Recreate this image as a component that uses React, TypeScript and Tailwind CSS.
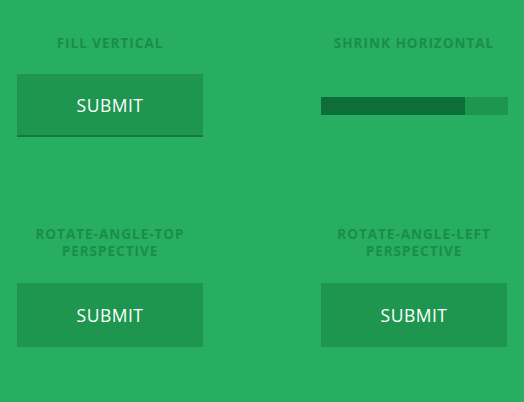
import React from 'react';

const Title: React.FC<{ lines: string[] }> = ({ lines }) => (
  <h2 className="text-center text-[13.5px] font-bold leading-[17px] tracking-[1px] text-[#1a8d4b]">
    {lines.map(l => (
      <div key={l}>{l}</div>
    ))}
  </h2>
);

const SubmitButton: React.FC<{ underline?: boolean }> = ({ underline }) => (
  <button
    className={
      'mx-[17px] flex w-[186px] items-center justify-center bg-[#1e9650] text-[17.5px] tracking-[0.5px] text-white ' +
      (underline ? 'h-[63px] border-b-2 border-[#137a3d] pt-[2px]' : 'h-[64px]')
    }
  >
    SUBMIT
  </button>
);

export default function App() {
  return (
    <div
      className="h-[402px] w-[524px] bg-[#27ae60] pt-[35px]"
      style={{ fontFamily: '"Open Sans", "Noto Sans", sans-serif' }}
    >
      <div className="grid grid-cols-[220px_220px] justify-between gap-y-[89px]">
        <div>
          <Title lines={['FILL VERTICAL']} />
          <div className="mt-[22px]">
            <SubmitButton underline />
          </div>
        </div>
        <div>
          <Title lines={['SHRINK HORIZONTAL']} />
          <div className="mx-[17px] mt-[45px] flex h-[18px] w-[187px] bg-[#1e9650]">
            <div className="h-full w-[144px] bg-[#0e6e37]" />
          </div>
        </div>
        <div>
          <Title lines={['ROTATE-ANGLE-TOP', 'PERSPECTIVE']} />
          <div className="mt-[23px]">
            <SubmitButton />
          </div>
        </div>
        <div>
          <Title lines={['ROTATE-ANGLE-LEFT', 'PERSPECTIVE']} />
          <div className="mt-[23px]">
            <SubmitButton />
          </div>
        </div>
      </div>
    </div>
  );
}
